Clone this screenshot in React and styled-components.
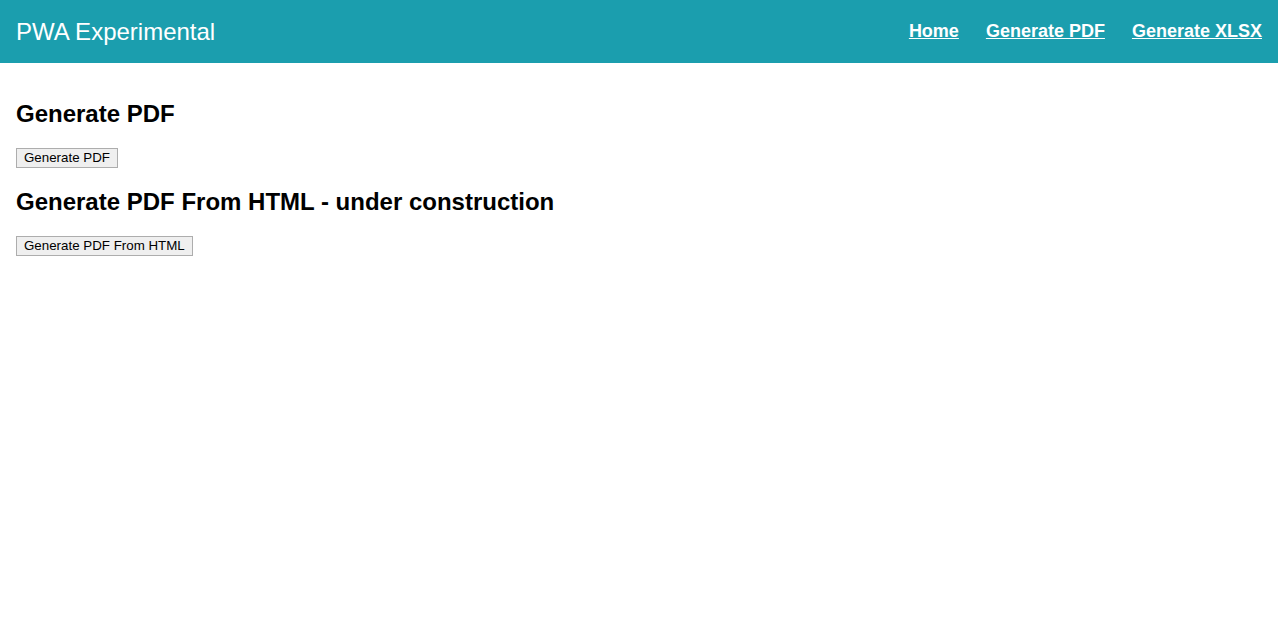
import React from "react";
import styled, { createGlobalStyle } from "styled-components";

const Global = createGlobalStyle`
  html, body { margin: 0; padding: 0; background: #fff; }
  body { font-family: "Liberation Sans", Arial, sans-serif; color: #000; }
`;

const Header = styled.header`
  height: 63px;
  background: #1b9eae;
  display: flex;
  align-items: center;
  justify-content: space-between;
  padding: 0 16px;
  color: #fff;
`;

const Title = styled.div`
  font-size: 24px;
  font-weight: normal;
`;

const Nav = styled.nav`
  display: flex;
  gap: 27px;
`;

const NavLink = styled.a`
  color: #fff;
  font-size: 18px;
  font-weight: bold;
  text-decoration: underline;
  cursor: pointer;
`;

const Main = styled.main`
  padding: 17px 16px 16px;
`;

const Heading = styled.h2`
  font-size: 24px;
  font-weight: bold;
  margin: 20px 0;
  line-height: 28px;
`;

const Button = styled.button`
  font-family: "Liberation Sans", Arial, sans-serif;
  font-size: 13.33px;
  color: #000;
  background: #efefef;
  border: 1px solid #adadad;
  border-radius: 0;
  padding: 1px 7px;
  height: 20px;
  line-height: 16px;
  display: block;
`;

export default function App() {
  return (
    <>
      <Global />
      <Header>
        <Title>PWA Experimental</Title>
        <Nav>
          <NavLink>Home</NavLink>
          <NavLink>Generate PDF</NavLink>
          <NavLink>Generate XLSX</NavLink>
        </Nav>
      </Header>
      <Main>
        <Heading>Generate PDF</Heading>
        <Button>Generate PDF</Button>
        <Heading>Generate PDF From HTML - under construction</Heading>
        <Button>Generate PDF From HTML</Button>
      </Main>
    </>
  );
}
